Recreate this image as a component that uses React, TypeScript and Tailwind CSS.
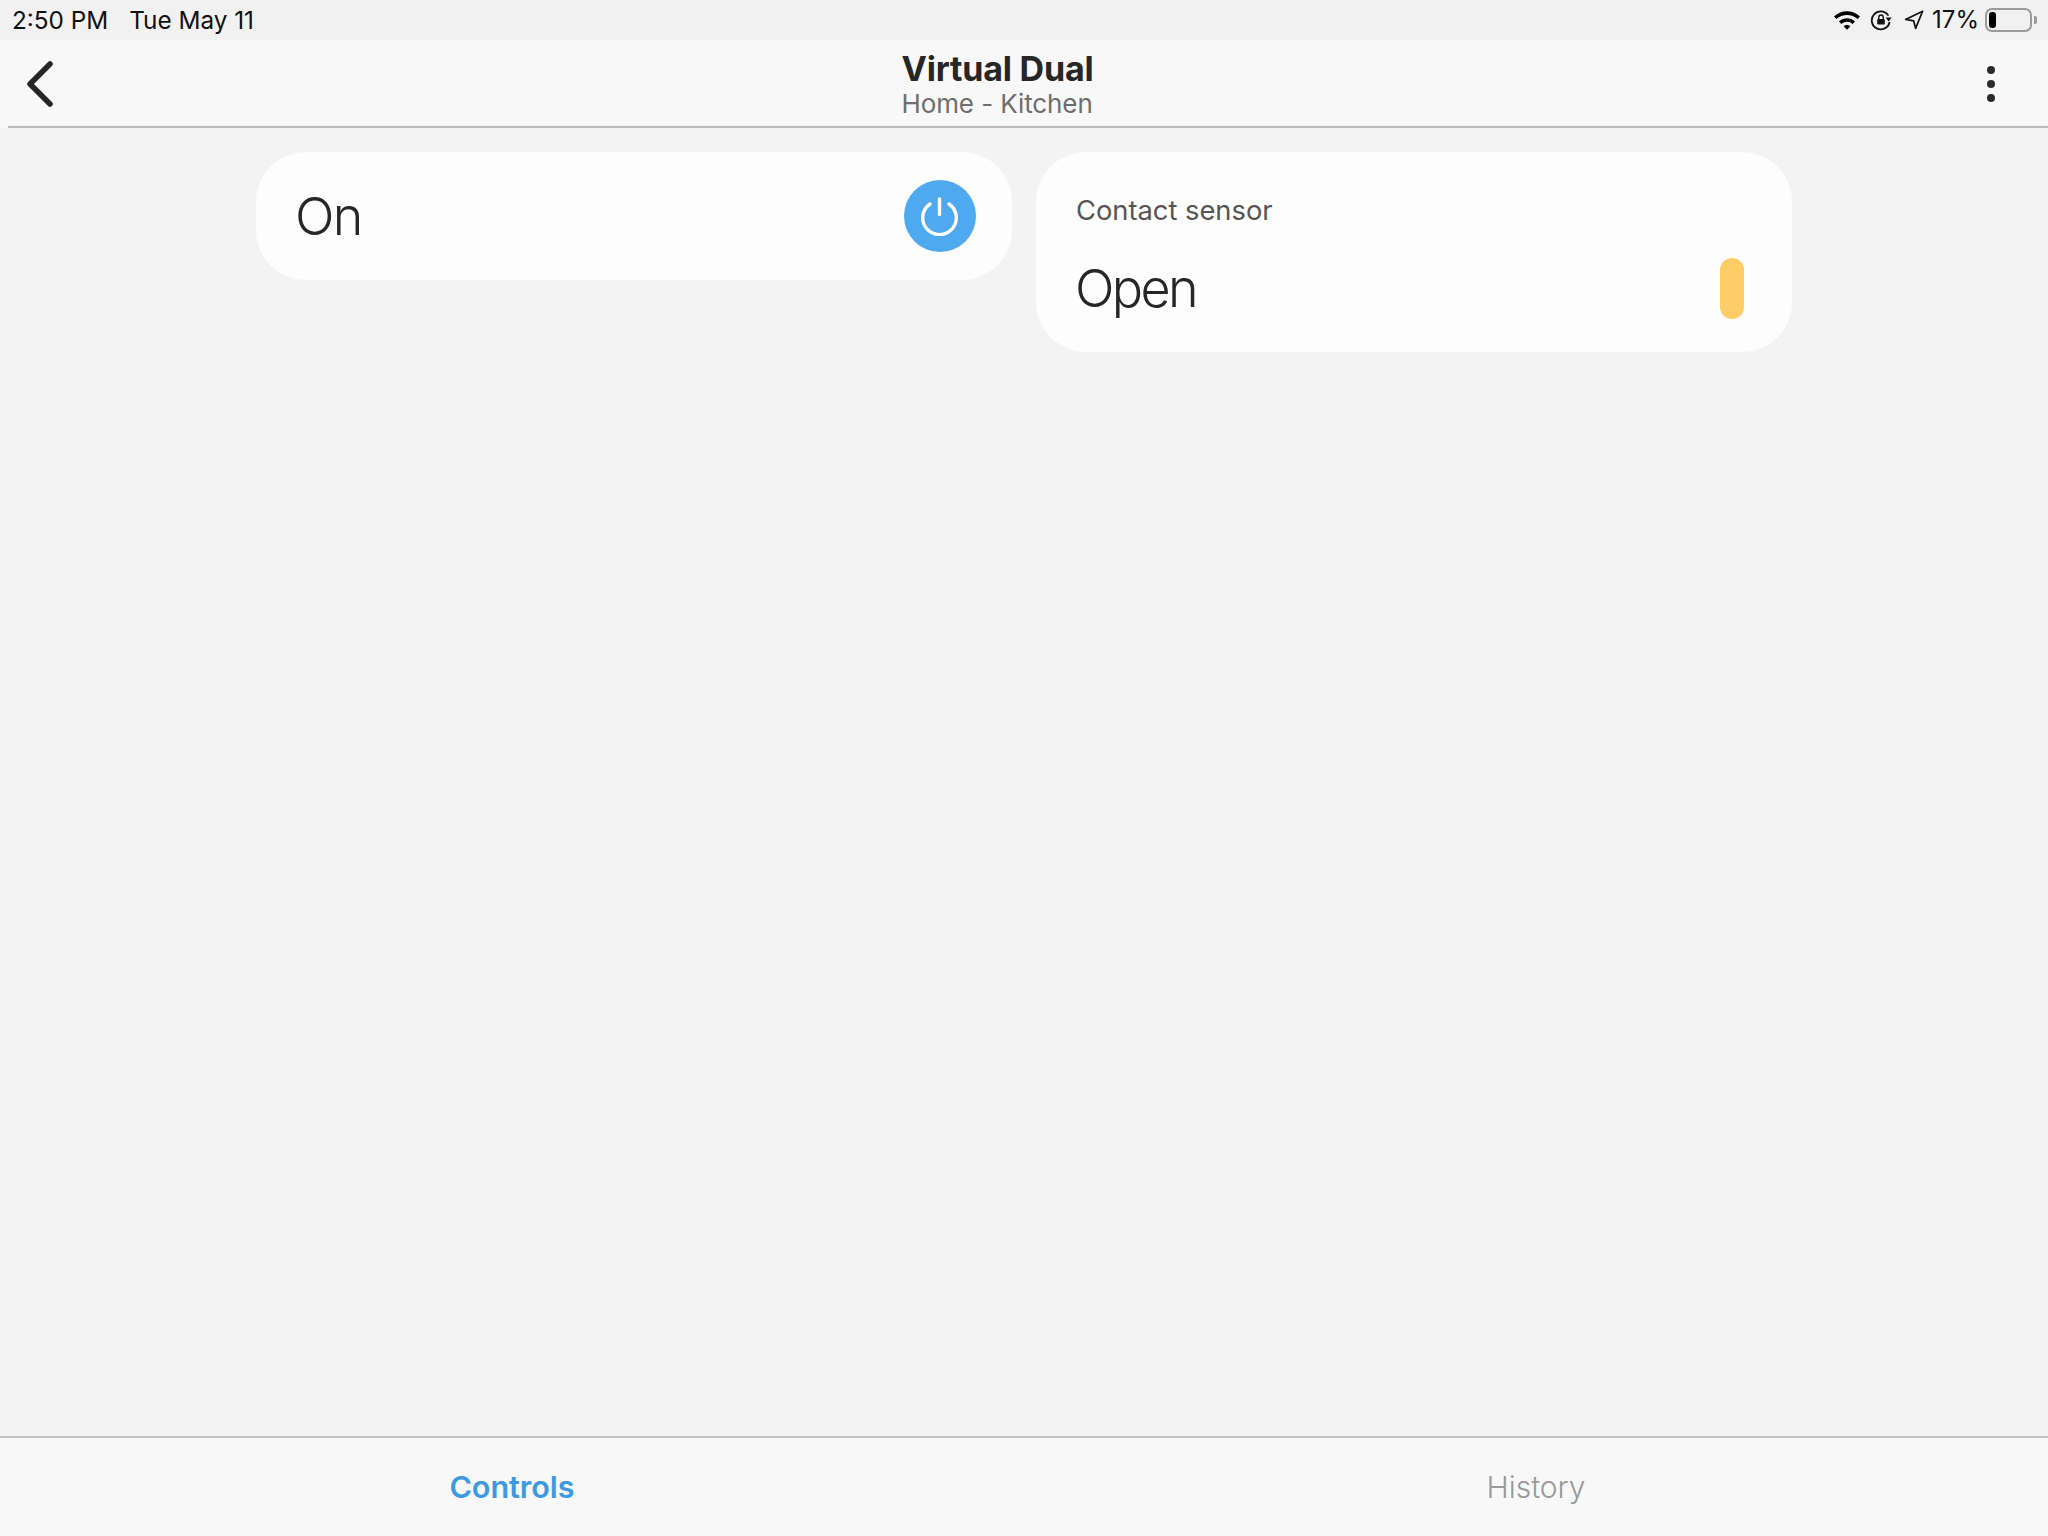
import React from "react";

const font = { fontFamily: "Inter, sans-serif" };

function StatusIcons() {
  return (
    <div className="flex items-center">
      {/* wifi */}
      <svg width="28" height="22" viewBox="0 0 28 22" className="mr-[9px]">
        <path d="M1 7.5C8.5 .5 19.5 .5 27 7.5L24.6 10C18.5 4.6 9.5 4.6 3.4 10Z" fill="#000" />
        <path d="M6 12.4C10.8 8.2 17.2 8.2 22 12.4L19.6 14.9C16.2 12.1 11.8 12.1 8.4 14.9Z" fill="#000" />
        <path d="M10.6 17.2C12.8 15.6 15.2 15.6 17.4 17.2L14 20.8Z" fill="#000" />
      </svg>
      {/* rotation lock */}
      <svg width="22" height="22" viewBox="0 0 22 22" className="mr-[12px]" fill="none">
        <path d="M18.4 6.6A9 9 0 1 0 19.6 13" stroke="#111" strokeWidth="1.8" />
        <path d="M15.6 8.6L21.6 8.6L18.6 12.4Z" fill="#111" />
        <rect x="7.2" y="10" width="7.6" height="5.6" rx="1" fill="#111" />
        <path d="M8.8 10V8.2A2.2 2.2 0 0 1 13.2 8.2V10" stroke="#111" strokeWidth="1.4" />
      </svg>
      {/* location */}
      <svg width="20" height="22" viewBox="0 0 20 22" className="mr-[8px]" fill="none">
        <path d="M18.6 2.2L1.6 10.4L9.6 11.8L11.6 19.4Z" stroke="#111" strokeWidth="1.7" strokeLinejoin="round" />
      </svg>
      <span className="text-[24px] leading-none text-[#111] mr-[6px]">17%</span>
      {/* battery */}
      <div className="flex items-center">
        <div className="w-[47px] h-[24px] rounded-[7px] border-2 border-[#9a9a9a] p-[2px] flex">
          <div className="w-[7px] rounded-[3px] bg-black" />
        </div>
        <div className="w-[3px] h-[8px] rounded-r-[2px] bg-[#9a9a9a] ml-[2px]" />
      </div>
    </div>
  );
}

function PowerIcon() {
  return (
    <svg width="40" height="40" viewBox="0 0 40 40" fill="none" stroke="#fff" strokeWidth="3.4" strokeLinecap="round">
      <path d="M19.5 3V18.5" />
      <path d="M10 8A16.8 16.8 0 1 0 29 8" />
    </svg>
  );
}

export default function App() {
  return (
    <div style={font} className="w-[2048px] h-[1536px] flex flex-col bg-[#f3f3f3] overflow-hidden">
      {/* status bar */}
      <div className="h-[40px] flex items-center justify-between pl-[12px] pr-[11px] bg-[#f1f1f1]">
        <div className="flex items-center gap-[21px] text-[24.3px] leading-none text-[#111]">
          <span>2:50 PM</span>
          <span>Tue May 11</span>
        </div>
        <StatusIcons />
      </div>

      {/* header */}
      <div className="h-[88px] pl-[8px] bg-[#f8f8f8]">
        <div className="relative h-full flex items-center justify-between border-b-2 border-[#bbbbbb] pl-[17px] pr-[53px]">
          <svg width="30" height="46" viewBox="0 0 30 46" fill="none" stroke="#262626" strokeWidth="5.5" strokeLinecap="round" strokeLinejoin="round" className="mt-[2px]">
            <path d="M25 3L5 23L25 43" />
          </svg>
          <div className="flex flex-col items-start mr-[47px] mt-[2px]">
            <span className="text-[34px] leading-[40px] font-bold text-[#262626] tracking-[-0.2px]">Virtual Dual</span>
            <span className="text-[26px] leading-[30px] text-[#6e6e6e] tracking-[-0.1px]">Home - Kitchen</span>
          </div>
          <div className="flex flex-col gap-[6px] mt-[1px]">
            <div className="w-[8px] h-[8px] rounded-full bg-[#2b2b2b]" />
            <div className="w-[8px] h-[8px] rounded-full bg-[#2b2b2b]" />
            <div className="w-[8px] h-[8px] rounded-full bg-[#2b2b2b]" />
          </div>
        </div>
      </div>

      {/* cards */}
      <div className="flex-1 flex justify-center items-start gap-6 pt-6">
        <div className="w-[756px] h-[128px] rounded-[50px] bg-[#fdfdfd] flex items-center justify-between pl-[39px] pr-[36px]">
          <span className="text-[52px] leading-none font-light text-[#262626] tracking-[-1.8px] mt-[1px]">On</span>
          <div className="w-[72px] h-[72px] rounded-full bg-[#4ea9ef] flex items-center justify-center">
            <PowerIcon />
          </div>
        </div>
        <div className="w-[756px] h-[200px] rounded-[50px] bg-[#fdfdfd] flex flex-col pl-[40px] pr-[48px] pt-[43px]">
          <span className="text-[27.3px] leading-[32px] text-[#555555]">Contact sensor</span>
          <div className="flex items-center justify-between mt-[29px]">
            <span className="text-[52px] leading-[62px] font-light text-[#262626] tracking-[-2.6px] ml-[-1px] mt-[2px]">Open</span>
            <div className="w-[24px] h-[61px] rounded-full bg-[#ffcc66]" />
          </div>
        </div>
      </div>

      {/* tabs */}
      <div className="h-[100px] flex border-t-2 border-[#c4c4c4] bg-[#f8f8f8]">
        <div className="flex-1 flex items-center justify-center text-[30.5px] font-semibold text-[#3c9ae2]">Controls</div>
        <div className="flex-1 flex items-center justify-center text-[30px] font-light text-[#999999]">History</div>
      </div>
    </div>
  );
}
